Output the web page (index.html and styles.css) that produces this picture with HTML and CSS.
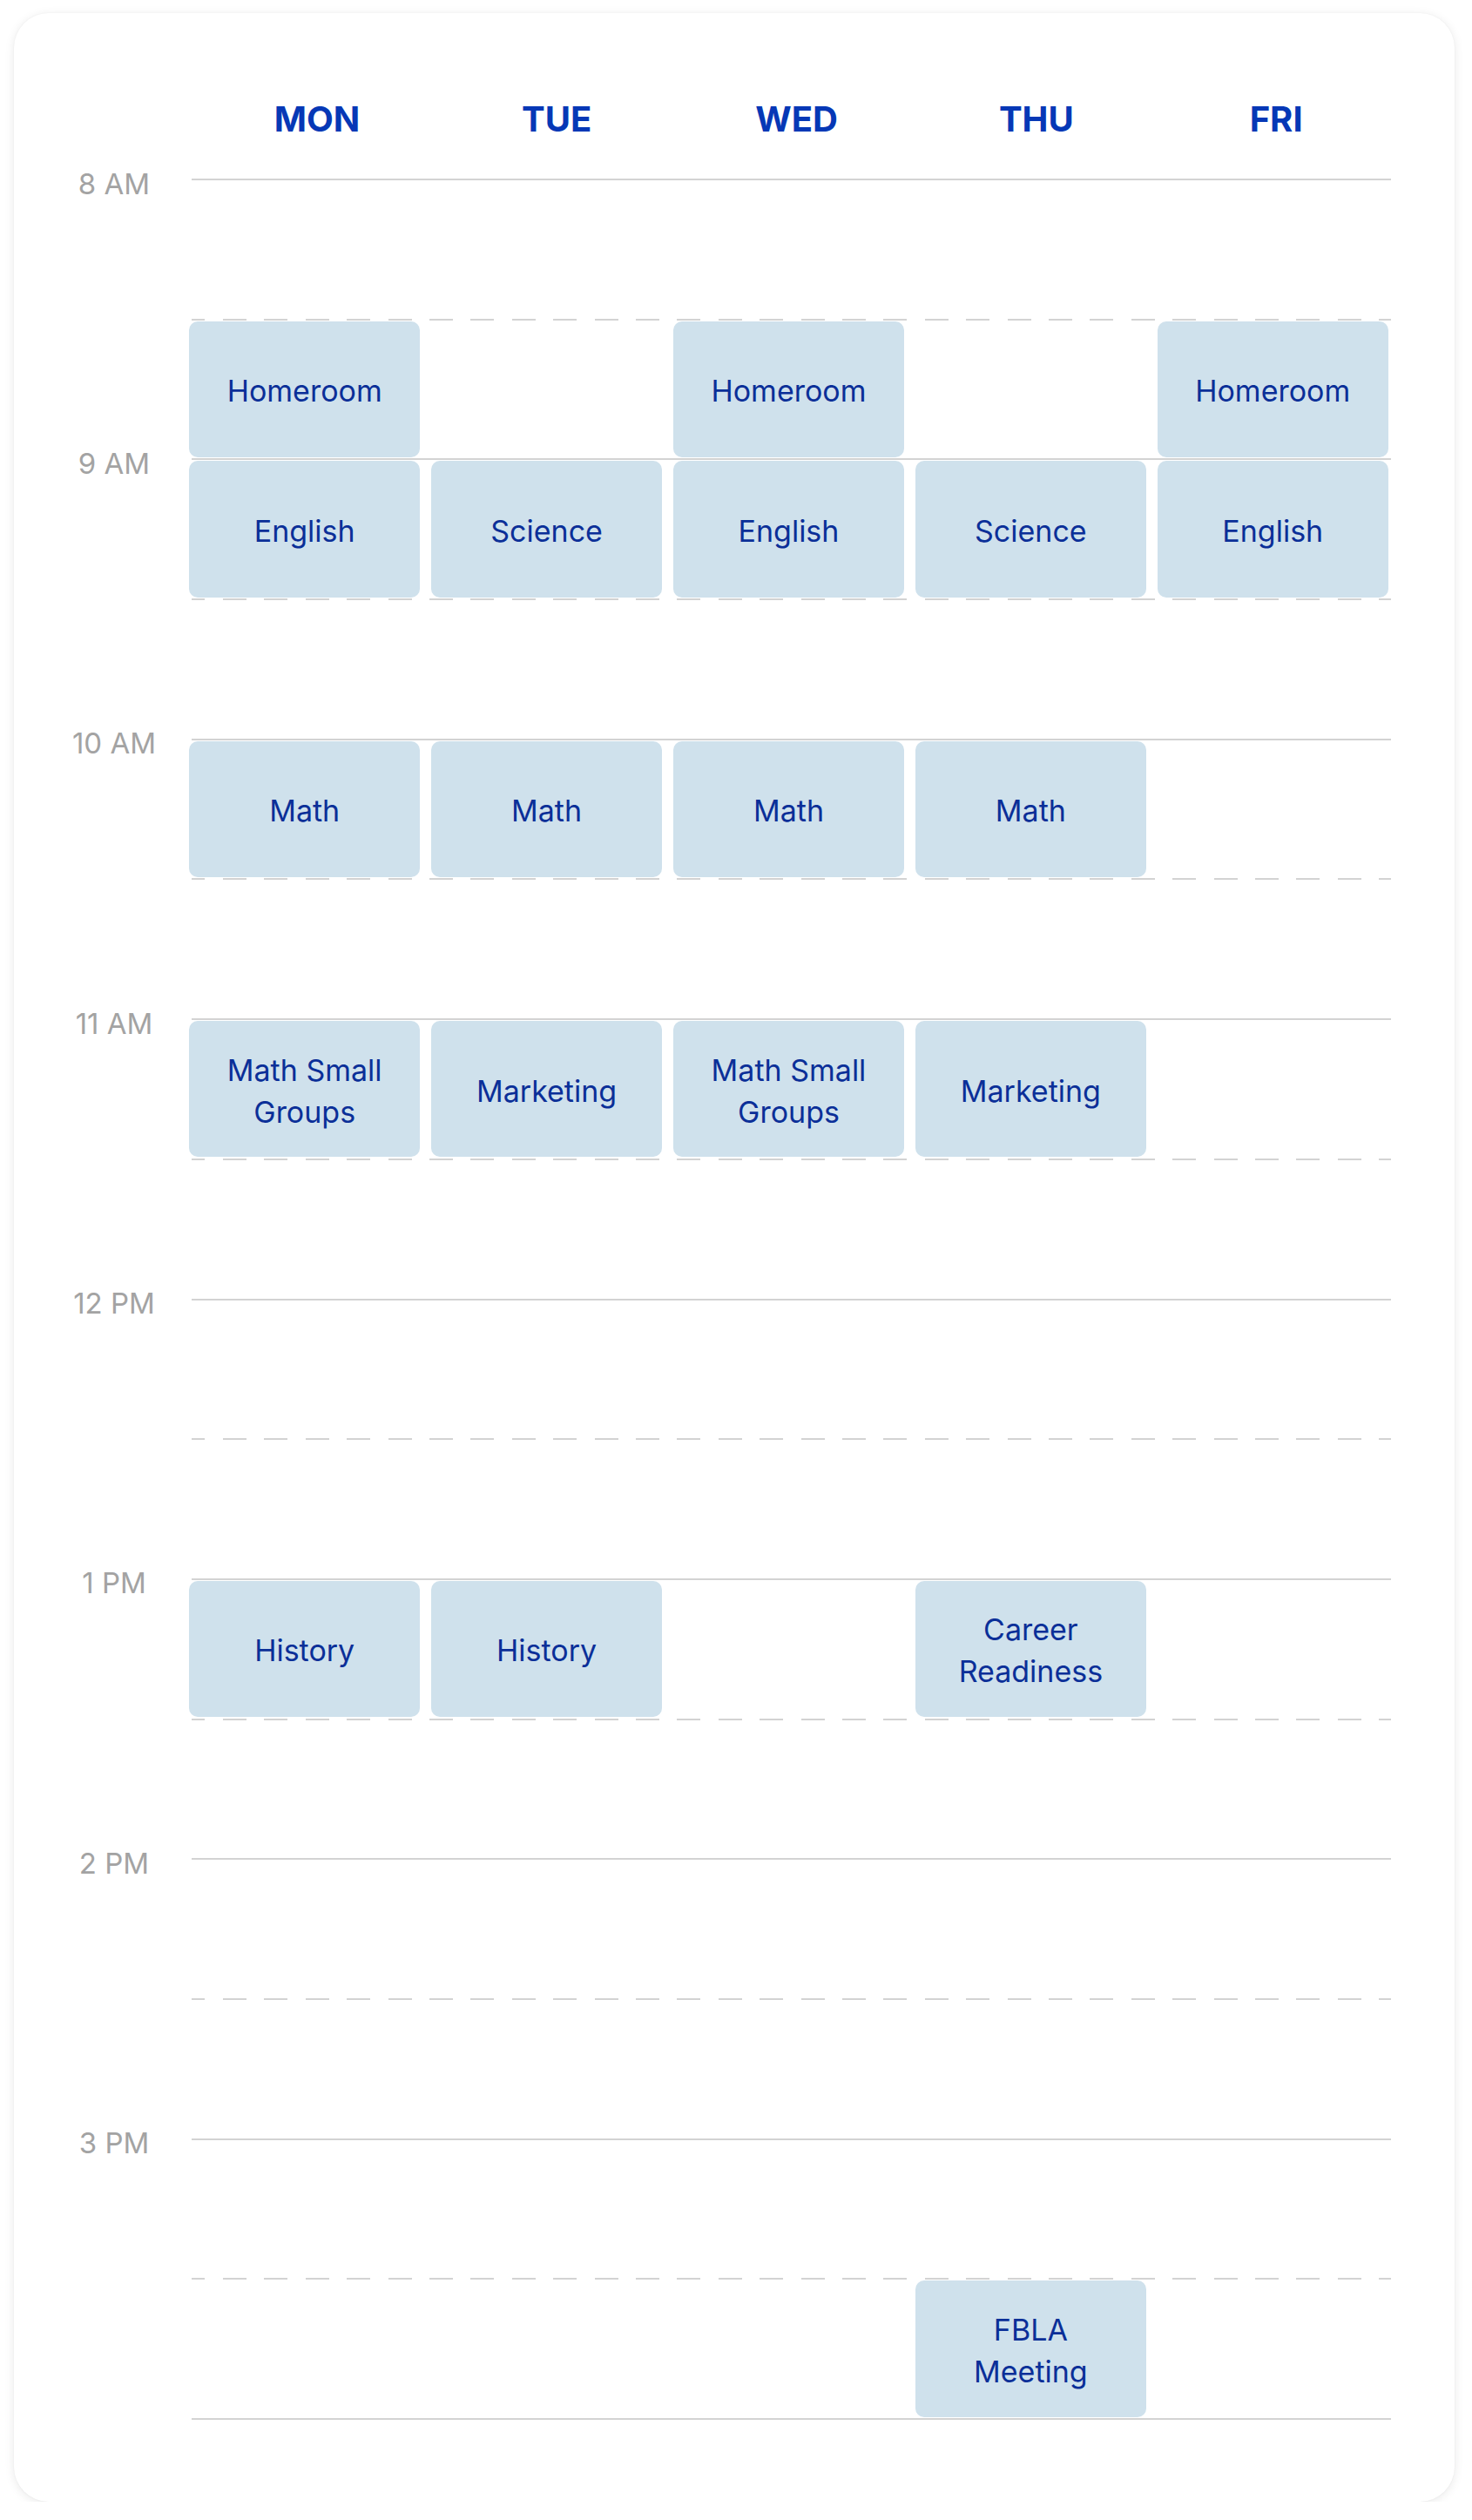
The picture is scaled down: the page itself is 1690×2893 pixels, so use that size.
FILE: index.html
```html
<!DOCTYPE html>
<html lang="en">
<head>
<meta charset="utf-8">
<title>Weekly Schedule</title>
<link rel="stylesheet" href="styles.css">
</head>
<body>
<div class="card">
  <div class="days">
    <div class="day">MON</div>
    <div class="day">TUE</div>
    <div class="day">WED</div>
    <div class="day">THU</div>
    <div class="day">FRI</div>
  </div>
  <div class="schedule">
    <div class="slot solid"><div class="time">8 AM</div></div>
    <div class="slot dashed">
      <div class="event mon">Homeroom</div>
      <div class="event wed">Homeroom</div>
      <div class="event fri">Homeroom</div>
    </div>
    <div class="slot solid"><div class="time">9 AM</div>
      <div class="event mon">English</div>
      <div class="event tue">Science</div>
      <div class="event wed">English</div>
      <div class="event thu">Science</div>
      <div class="event fri">English</div>
    </div>
    <div class="slot dashed"></div>
    <div class="slot solid"><div class="time">10 AM</div>
      <div class="event mon">Math</div>
      <div class="event tue">Math</div>
      <div class="event wed">Math</div>
      <div class="event thu">Math</div>
    </div>
    <div class="slot dashed"></div>
    <div class="slot solid"><div class="time">11 AM</div>
      <div class="event mon">Math Small Groups</div>
      <div class="event tue">Marketing</div>
      <div class="event wed">Math Small Groups</div>
      <div class="event thu">Marketing</div>
    </div>
    <div class="slot dashed"></div>
    <div class="slot solid"><div class="time">12 PM</div></div>
    <div class="slot dashed"></div>
    <div class="slot solid"><div class="time">1 PM</div>
      <div class="event mon">History</div>
      <div class="event tue">History</div>
      <div class="event thu">Career Readiness</div>
    </div>
    <div class="slot dashed"></div>
    <div class="slot solid"><div class="time">2 PM</div></div>
    <div class="slot dashed"></div>
    <div class="slot solid"><div class="time">3 PM</div></div>
    <div class="slot dashed">
      <div class="event thu">FBLA Meeting</div>
    </div>
    <div class="slot solid end"></div>
  </div>
</div>
</body>
</html>
```

FILE: styles.css
```css
* {
  box-sizing: border-box;
}

html, body {
  margin: 0;
  padding: 0;
  background: #ffffff;
}

body {
  font-family: Inter, "Noto Sans", "Liberation Sans", sans-serif;
}

.card {
  margin: 15px 0 0 16px;
  width: 1654px;
  height: 2857px;
  background: #ffffff;
  border-radius: 40px;
  box-shadow: 0 2px 12px rgba(0, 0, 0, 0.09), 0 0 2px rgba(0, 0, 0, 0.05);
  padding-top: 97.5px;
}

.days {
  display: grid;
  grid-template-columns: repeat(5, 275.3px);
  margin-left: 210.3px;
  height: 48px;
}

.day {
  text-align: center;
  font-size: 40px;
  line-height: 48px;
  font-weight: 700;
  color: #0638b6;
}

.schedule {
  margin-top: 44.5px;
}

.slot {
  display: grid;
  grid-template-columns: 201px repeat(5, 277.9px);
  grid-template-rows: 160.7px;
  height: 160.7px;
  background-repeat: no-repeat;
  background-position: 204px 0;
  background-size: 1377px 2px;
}

.slot.solid {
  background-image: linear-gradient(#d3d3d3, #d3d3d3);
}

.slot.dashed {
  background-image: repeating-linear-gradient(90deg, #d3d3d3 0 15.5px, transparent 15.5px 35.9px, #d3d3d3 35.9px 47.4px);
}

.slot.end {
  height: 2px;
  grid-template-rows: 2px;
}

.time {
  grid-column: 1;
  grid-row: 1;
  align-self: start;
  margin-top: -14.5px;
  padding-left: 29px;
  font-size: 33px;
  line-height: 40px;
  color: #a3a3a3;
  text-align: center;
  white-space: nowrap;
}

.event {
  grid-row: 1;
  margin: 3px 12.5px 1.5px 0;
  background: #cfe1ec;
  border-radius: 10px;
  color: #0b2f98;
  font-size: 34px;
  line-height: 48px;
  display: flex;
  align-items: center;
  justify-content: center;
  text-align: center;
  padding: 5px 40px 0;
}

.event.mon { grid-column: 2; }
.event.tue { grid-column: 3; }
.event.wed { grid-column: 4; }
.event.thu { grid-column: 5; }
.event.fri { grid-column: 6; }
```
